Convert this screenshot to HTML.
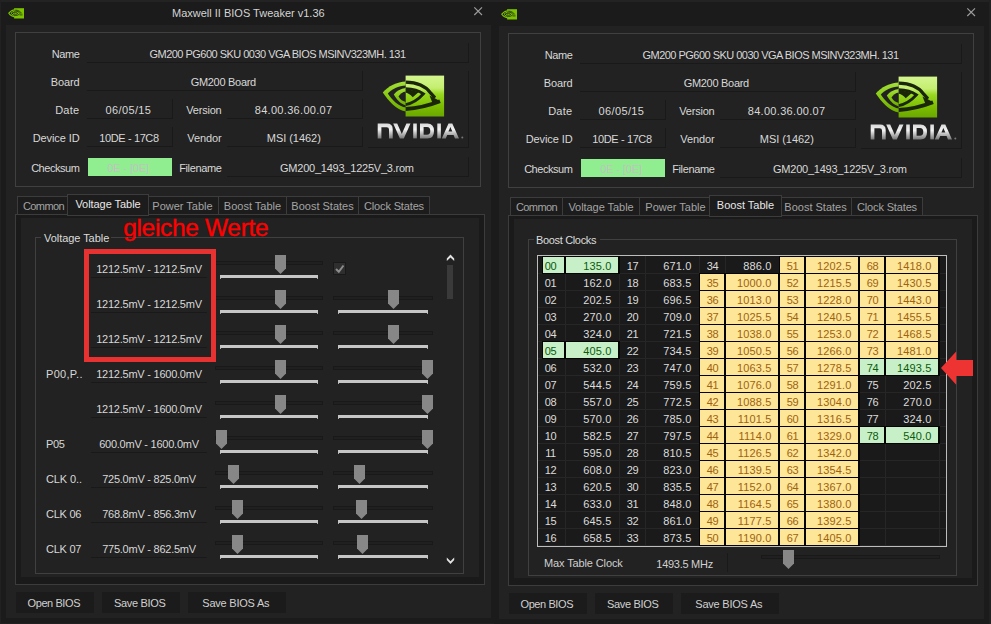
<!DOCTYPE html><html><head><meta charset="utf-8"><style>
html,body{margin:0;padding:0;width:991px;height:624px;overflow:hidden;background:#1b1b1b;position:relative;font-family:"Liberation Sans",sans-serif}
body>div,body>svg{position:absolute}
</style></head><body>
<div style="left:0px;top:0px;width:991px;height:2px;background:#232323;"></div>
<div style="left:0px;top:0px;width:1px;height:624px;background:#212121;"></div>
<div style="left:0px;top:623px;width:494px;height:1px;background:#202020;"></div>
<div style="left:989px;top:0px;width:2px;height:624px;background:#212121;"></div>
<div style="left:6px;top:25px;width:485px;height:593px;background:#222222;"></div>
<svg style="left:8px;top:8px" width="17" height="11" viewBox="8 7.5 17 11">
<defs><clipPath id="ic1"><rect x="8" y="7" width="6.1" height="12"/></clipPath><clipPath id="ir1"><rect x="14.1" y="7" width="10" height="12"/></clipPath></defs>
<rect x="14.1" y="7.7" width="9.9" height="10.3" fill="#7cc400"/>
<g clip-path="url(#ic1)" fill="none" stroke="#7cc400">
<path d="M8.8 12.7 C10.8 10 13 9.2 15.8 9.2 C18.8 9.2 21 11 22.2 12.9 C20.8 15 18.4 16.4 15.5 16.4 C12.6 16.4 10.4 15 8.8 12.7Z" stroke-width="1.1"/><path d="M11 12.8 C12.3 11.3 13.8 10.6 15.6 10.6 C17.6 10.6 19.1 11.6 20 12.9 C19 14.2 17.5 15 15.5 15 C13.6 15 12.2 14.1 11 12.8Z" stroke-width="1"/><path d="M13.2 12.8 C13.9 12.1 14.7 11.9 15.5 11.9 C16.5 12 17.2 12.4 17.7 12.9 C17.1 13.5 16.4 13.8 15.5 13.8 C14.6 13.8 13.8 13.4 13.2 12.8Z" stroke-width="0.9"/>
</g>
<g clip-path="url(#ir1)" fill="none" stroke="#141414">
<path d="M11 12.8 C12.3 11.3 13.8 10.6 15.6 10.6 C17.6 10.6 19.1 11.6 20 12.9 C19 14.2 17.5 15 15.5 15 C13.6 15 12.2 14.1 11 12.8Z" stroke-width="0.7"/><path d="M13.2 12.8 C13.9 12.1 14.7 11.9 15.5 11.9 C16.5 12 17.2 12.4 17.7 12.9 C17.1 13.5 16.4 13.8 15.5 13.8 C14.6 13.8 13.8 13.4 13.2 12.8Z" stroke-width="0.7"/>
<path d="M15.3 9.6 C18.3 9.6 20.6 11.2 21.8 13 M19.5 14.4 L22.5 14.4" stroke-width="0.7"/>
</g>
</svg>
<svg style="left:473px;top:6px" width="10" height="10" viewBox="0 0 10 10">
<path d="M1.3 1.3L9 9M9 1.3L1.3 9" stroke="#9c9c9c" stroke-width="1.15"/></svg>
<div style="left:172px;top:2.93px;height:20px;line-height:20px;font-size:11px;color:#d4d4d4;white-space:pre;">Maxwell II BIOS Tweaker v1.36</div>
<div style="left:15px;top:32px;width:466px;height:155px;border:1px solid #404040;box-sizing:border-box;"></div>
<div style="left:-320.5px;width:400px;text-align:right;top:44.13px;height:20px;line-height:20px;font-size:11px;color:#d8d8d8;letter-spacing:-0.38px;white-space:pre;">Name</div>
<div style="left:-320.5px;width:400px;text-align:right;top:72.13px;height:20px;line-height:20px;font-size:11px;color:#d8d8d8;letter-spacing:-0.12px;white-space:pre;">Board</div>
<div style="left:-320.5px;width:400px;text-align:right;top:100.13px;height:20px;line-height:20px;font-size:11px;color:#d8d8d8;letter-spacing:0.28px;white-space:pre;">Date</div>
<div style="left:-320.5px;width:400px;text-align:right;top:128.13px;height:20px;line-height:20px;font-size:11px;color:#d8d8d8;letter-spacing:-0.09px;white-space:pre;">Device ID</div>
<div style="left:-320.5px;width:400px;text-align:right;top:157.83px;height:20px;line-height:20px;font-size:11px;color:#d8d8d8;letter-spacing:-0.45px;white-space:pre;">Checksum</div>
<div style="left:-178.5px;width:400px;text-align:right;top:100.13px;height:20px;line-height:20px;font-size:11px;color:#d8d8d8;letter-spacing:-0.22px;white-space:pre;">Version</div>
<div style="left:-178.5px;width:400px;text-align:right;top:128.13px;height:20px;line-height:20px;font-size:11px;color:#d8d8d8;letter-spacing:-0.12px;white-space:pre;">Vendor</div>
<div style="left:-178.5px;width:400px;text-align:right;top:157.83px;height:20px;line-height:20px;font-size:11px;color:#d8d8d8;letter-spacing:-0.36px;white-space:pre;">Filename</div>
<div style="left:87px;top:43px;width:382px;height:20px;border-right:1px solid #191919;border-bottom:1px solid #191919;box-sizing:border-box;"></div>
<div style="left:87px;top:71px;width:276px;height:20px;border-right:1px solid #191919;border-bottom:1px solid #191919;box-sizing:border-box;"></div>
<div style="left:87px;top:99px;width:86px;height:20px;border-right:1px solid #191919;border-bottom:1px solid #191919;box-sizing:border-box;"></div>
<div style="left:227px;top:99px;width:136px;height:20px;border-right:1px solid #191919;border-bottom:1px solid #191919;box-sizing:border-box;"></div>
<div style="left:87px;top:127px;width:86px;height:20px;border-right:1px solid #191919;border-bottom:1px solid #191919;box-sizing:border-box;"></div>
<div style="left:227px;top:127px;width:136px;height:20px;border-right:1px solid #191919;border-bottom:1px solid #191919;box-sizing:border-box;"></div>
<div style="left:227px;top:157px;width:242px;height:20px;border-right:1px solid #191919;border-bottom:1px solid #191919;box-sizing:border-box;"></div>
<div style="left:368px;top:71px;width:101px;height:77px;border-right:1px solid #191919;border-bottom:1px solid #191919;box-sizing:border-box;"></div>
<div style="left:88px;top:158px;width:84px;height:18px;background:#90ee90;"></div>
<div style="left:77.5px;width:400px;text-align:center;top:44.13px;height:20px;line-height:20px;font-size:11px;color:#d8d8d8;letter-spacing:-0.52px;white-space:pre;">GM200 PG600 SKU 0030 VGA BIOS MSINV323MH. 131</div>
<div style="left:23.30000000000001px;width:400px;text-align:center;top:72.13px;height:20px;line-height:20px;font-size:11px;color:#d8d8d8;letter-spacing:-0.29px;white-space:pre;">GM200 Board</div>
<div style="left:-71.6px;width:400px;text-align:center;top:100.13px;height:20px;line-height:20px;font-size:11px;color:#d8d8d8;letter-spacing:0.37px;white-space:pre;">06/05/15</div>
<div style="left:93.60000000000002px;width:400px;text-align:center;top:100.13px;height:20px;line-height:20px;font-size:11px;color:#d8d8d8;letter-spacing:0.31px;white-space:pre;">84.00.36.00.07</div>
<div style="left:-71px;width:400px;text-align:center;top:128.13px;height:20px;line-height:20px;font-size:11px;color:#d8d8d8;letter-spacing:-0.39px;white-space:pre;">10DE - 17C8</div>
<div style="left:93.80000000000001px;width:400px;text-align:center;top:128.13px;height:20px;line-height:20px;font-size:11px;color:#d8d8d8;letter-spacing:-0.04px;white-space:pre;">MSI (1462)</div>
<div style="left:-71.9px;width:400px;text-align:center;top:157.83px;height:20px;line-height:20px;font-size:11px;color:#c2c2c2;letter-spacing:-0.1px;white-space:pre;">0E - [0E]</div>
<div style="left:146.89999999999998px;width:400px;text-align:center;top:157.83px;height:20px;line-height:20px;font-size:11px;color:#d8d8d8;letter-spacing:-0.23px;white-space:pre;">GM200_1493_1225V_3.rom</div>
<svg style="left:376px;top:72px" width="92" height="72" viewBox="376 72 92 72">
<defs>
<linearGradient id="g0" x1="0" y1="0" x2="0" y2="1">
<stop offset="0" stop-color="#d4f68e"/><stop offset="0.3" stop-color="#c4ee70"/><stop offset="0.45" stop-color="#98d820"/><stop offset="0.75" stop-color="#7cbc00"/><stop offset="1" stop-color="#6aa800"/>
</linearGradient>
<linearGradient id="e0" x1="0" y1="0" x2="0" y2="1">
<stop offset="0" stop-color="#a4e03a"/><stop offset="0.5" stop-color="#86c810"/><stop offset="1" stop-color="#6cac00"/>
</linearGradient>
<linearGradient id="s0" x1="0" y1="0" x2="0" y2="1">
<stop offset="0" stop-color="#d8d8d8"/><stop offset="0.4" stop-color="#f2f2f2"/><stop offset="0.7" stop-color="#b4b4b4"/><stop offset="1" stop-color="#7a7a7a"/>
</linearGradient>
<clipPath id="cl0"><rect x="370" y="70" width="35.6" height="50"/></clipPath>
<clipPath id="cr0"><rect x="405.6" y="75.6" width="38.5" height="40.9"/></clipPath>
</defs>
<rect x="405.6" y="75.6" width="38.5" height="40.9" fill="url(#g0)"/>
<g clip-path="url(#cl0)">
<path d="M406 81.6 C397 81.8 388 86.5 382.8 92.4 C388 100.5 397 110.5 406 111.5Z" fill="url(#e0)"/>
<path d="M406 85.6 C398.5 86 391.5 89.5 387.8 93.5 C391.5 99.5 398.5 106.5 406 107.6Z" fill="#222"/>
<path d="M406 88 C400.5 88.5 396.5 91 393.8 94.5 C396.5 99 400.5 104.5 406 105.2Z" fill="url(#e0)"/>
<path d="M406 91.6 C402.5 92 400 94 398.5 96.5 C400 99.5 403 101.5 406 102Z" fill="#222"/>
</g>
<g clip-path="url(#cr0)" fill="#1b2608">
<path d="M405.6 82.2 C416 82.3 425.5 86 430.8 93.2 L435 97.8" fill="none" stroke="#1b2608" stroke-width="3.2"/>
<path d="M429.5 95.5 L440.4 101.2 L432.5 103 Z"/>
<path d="M405.6 109 C420 108.2 431 104.8 440 101.3" fill="none" stroke="#1b2608" stroke-width="3.8"/>
<path d="M405.6 88.6 C413 88.8 419.5 90.9 423.5 93.8 C419 98.8 413 103.4 405.6 104.6" fill="none" stroke="#1b2608" stroke-width="2.8"/>
<path d="M405.6 89.5 C411 89.8 415.5 90.8 418.5 92.2 L412.7 97.2 C410.5 94.8 408.5 93.2 405.6 92.6 Z"/>
</g>
<g fill="url(#s0)" fill-rule="evenodd">
<path d="M377.7 138.4 V123.5 H387 Q392.7 123.5 392.7 129 V138.4 H389 V129.5 Q389 127.2 386.7 127.2 H381.4 V138.4Z"/>
<path d="M393.2 123.5 H397.2 L401.8 134 L406.4 123.5 H410.5 L403.8 138.4 H399.9Z"/>
<path d="M413.2 123.5 H416.8 V138.4 H413.2Z"/>
<path d="M420 123.5 H427.5 Q434 123.5 434 131 Q434 138.4 427.5 138.4 H420Z M423.6 127.1 V134.8 H427 Q430.3 134.8 430.3 131 Q430.3 127.1 427 127.1Z"/>
<path d="M437.3 123.5 H440.9 V138.4 H437.3Z"/>
<path d="M441.8 138.4 L448.5 123.5 H452.3 L459 138.4 H455 L453.6 135 H447.2 L445.8 138.4Z M448.4 131.6 H452.3 L450.4 127Z"/>
</g>
<circle cx="462.3" cy="137.4" r="1" fill="#777"/>
</svg>
<div style="left:15px;top:214px;width:470px;height:371px;border:1px solid #3c3c3c;box-sizing:border-box;background:#1a1a1a;"></div>
<div style="left:21px;top:218px;width:458px;height:359px;background:#222222;"></div>
<div style="left:17px;top:196px;width:53px;height:18px;border:1px solid #3c3c3c;border-bottom:none;box-sizing:border-box;background:#1c1c1c"></div>
<div style="left:-156.5px;width:400px;text-align:center;top:195.63px;height:20px;line-height:20px;font-size:11px;color:#a4a4a4;letter-spacing:-0.62px;white-space:pre;">Common</div>
<div style="left:146px;top:196px;width:73px;height:18px;border:1px solid #3c3c3c;border-bottom:none;box-sizing:border-box;background:#1c1c1c"></div>
<div style="left:-17.5px;width:400px;text-align:center;top:195.63px;height:20px;line-height:20px;font-size:11px;color:#a4a4a4;letter-spacing:0.0px;white-space:pre;">Power Table</div>
<div style="left:218px;top:196px;width:69px;height:18px;border:1px solid #3c3c3c;border-bottom:none;box-sizing:border-box;background:#1c1c1c"></div>
<div style="left:52.5px;width:400px;text-align:center;top:195.63px;height:20px;line-height:20px;font-size:11px;color:#a4a4a4;letter-spacing:0.0px;white-space:pre;">Boost Table</div>
<div style="left:286px;top:196px;width:73px;height:18px;border:1px solid #3c3c3c;border-bottom:none;box-sizing:border-box;background:#1c1c1c"></div>
<div style="left:122.5px;width:400px;text-align:center;top:195.63px;height:20px;line-height:20px;font-size:11px;color:#a4a4a4;letter-spacing:0.0px;white-space:pre;">Boost States</div>
<div style="left:358px;top:196px;width:72px;height:18px;border:1px solid #3c3c3c;border-bottom:none;box-sizing:border-box;background:#1c1c1c"></div>
<div style="left:194.0px;width:400px;text-align:center;top:195.63px;height:20px;line-height:20px;font-size:11px;color:#a4a4a4;letter-spacing:-0.15px;white-space:pre;">Clock States</div>
<div style="left:67px;top:194px;width:82px;height:22px;border:1px solid #3c3c3c;box-sizing:border-box;background:#1c1c1c"></div>
<div style="left:-92.0px;width:400px;text-align:center;top:194.13px;height:20px;line-height:20px;font-size:11px;color:#e8e8e8;letter-spacing:-0.05px;white-space:pre;">Voltage Table</div>
<div style="left:16px;top:592px;width:78px;height:21px;background:#1b1b1b;"></div>
<div style="left:-146.2px;width:400px;text-align:center;top:593.13px;height:20px;line-height:20px;font-size:11px;color:#d0d0d0;letter-spacing:-0.41px;white-space:pre;">Open BIOS</div>
<div style="left:102px;top:592px;width:78px;height:21px;background:#1b1b1b;"></div>
<div style="left:-60.19999999999999px;width:400px;text-align:center;top:593.13px;height:20px;line-height:20px;font-size:11px;color:#d0d0d0;letter-spacing:-0.33px;white-space:pre;">Save BIOS</div>
<div style="left:188px;top:592px;width:98px;height:21px;background:#1b1b1b;"></div>
<div style="left:35.80000000000001px;width:400px;text-align:center;top:593.13px;height:20px;line-height:20px;font-size:11px;color:#d0d0d0;letter-spacing:-0.22px;white-space:pre;">Save BIOS As</div>
<div style="left:35px;top:237px;width:429px;height:337px;border:1px solid #404040;box-sizing:border-box;"></div>
<div style="left:41px;top:230px;width:70px;height:14px;background:#222222;"></div>
<div style="left:44px;top:228.13px;height:20px;line-height:20px;font-size:11px;color:#dcdcdc;letter-spacing:-0.05px;white-space:pre;">Voltage Table</div>
<div style="left:91px;top:277px;width:116px;height:1px;background:#191919;"></div>
<div style="left:-51px;width:400px;text-align:center;top:259.13px;height:20px;line-height:20px;font-size:11px;color:#d8d8d8;letter-spacing:-0.24px;white-space:pre;">1212.5mV - 1212.5mV</div>
<div style="left:215px;top:261px;width:108px;height:4px;border:1px solid #191919;box-sizing:border-box;background:#202020"></div>
<div style="left:220px;top:275px;width:98px;height:3px;background:#c6c6c6;"></div>
<div style="left:220px;top:278px;width:1px;height:1px;background:#aaaaaa;"></div>
<div style="left:317px;top:278px;width:1px;height:1px;background:#aaaaaa;"></div>
<svg style="left:275.0px;top:255px" width="11" height="20" viewBox="0 0 11 20"><path d="M0 0H11V13.5L5.5 19L0 13.5Z" fill="#878787"/></svg>
<svg style="left:333px;top:262px" width="13" height="13" viewBox="0 0 13 13"><rect x="0.5" y="0.5" width="12" height="12" fill="#2e2e2e" stroke="#191919"/><path d="M3 7L5.8 9.8L10.5 3.5" fill="none" stroke="#8c8c8c" stroke-width="2"/></svg>
<div style="left:91px;top:312px;width:116px;height:1px;background:#191919;"></div>
<div style="left:-51px;width:400px;text-align:center;top:294.13px;height:20px;line-height:20px;font-size:11px;color:#d8d8d8;letter-spacing:-0.24px;white-space:pre;">1212.5mV - 1212.5mV</div>
<div style="left:215px;top:296px;width:108px;height:4px;border:1px solid #191919;box-sizing:border-box;background:#202020"></div>
<div style="left:220px;top:310px;width:98px;height:3px;background:#c6c6c6;"></div>
<div style="left:220px;top:313px;width:1px;height:1px;background:#aaaaaa;"></div>
<div style="left:317px;top:313px;width:1px;height:1px;background:#aaaaaa;"></div>
<svg style="left:275.0px;top:290px" width="11" height="20" viewBox="0 0 11 20"><path d="M0 0H11V13.5L5.5 19L0 13.5Z" fill="#878787"/></svg>
<div style="left:333px;top:296px;width:100px;height:4px;border:1px solid #191919;box-sizing:border-box;background:#202020"></div>
<div style="left:338px;top:310px;width:90px;height:3px;background:#c6c6c6;"></div>
<div style="left:338px;top:313px;width:1px;height:1px;background:#aaaaaa;"></div>
<div style="left:427px;top:313px;width:1px;height:1px;background:#aaaaaa;"></div>
<svg style="left:388.0px;top:290px" width="11" height="20" viewBox="0 0 11 20"><path d="M0 0H11V13.5L5.5 19L0 13.5Z" fill="#878787"/></svg>
<div style="left:91px;top:347px;width:116px;height:1px;background:#191919;"></div>
<div style="left:-51px;width:400px;text-align:center;top:329.13px;height:20px;line-height:20px;font-size:11px;color:#d8d8d8;letter-spacing:-0.24px;white-space:pre;">1212.5mV - 1212.5mV</div>
<div style="left:215px;top:331px;width:108px;height:4px;border:1px solid #191919;box-sizing:border-box;background:#202020"></div>
<div style="left:220px;top:345px;width:98px;height:3px;background:#c6c6c6;"></div>
<div style="left:220px;top:348px;width:1px;height:1px;background:#aaaaaa;"></div>
<div style="left:317px;top:348px;width:1px;height:1px;background:#aaaaaa;"></div>
<svg style="left:275.0px;top:325px" width="11" height="20" viewBox="0 0 11 20"><path d="M0 0H11V13.5L5.5 19L0 13.5Z" fill="#878787"/></svg>
<div style="left:333px;top:331px;width:100px;height:4px;border:1px solid #191919;box-sizing:border-box;background:#202020"></div>
<div style="left:338px;top:345px;width:90px;height:3px;background:#c6c6c6;"></div>
<div style="left:338px;top:348px;width:1px;height:1px;background:#aaaaaa;"></div>
<div style="left:427px;top:348px;width:1px;height:1px;background:#aaaaaa;"></div>
<svg style="left:388.0px;top:325px" width="11" height="20" viewBox="0 0 11 20"><path d="M0 0H11V13.5L5.5 19L0 13.5Z" fill="#878787"/></svg>
<div style="left:46px;top:364.13px;height:20px;line-height:20px;font-size:11px;color:#d8d8d8;letter-spacing:0.3px;white-space:pre;">P00,P..</div>
<div style="left:91px;top:382px;width:116px;height:1px;background:#191919;"></div>
<div style="left:-51px;width:400px;text-align:center;top:364.13px;height:20px;line-height:20px;font-size:11px;color:#d8d8d8;letter-spacing:-0.24px;white-space:pre;">1212.5mV - 1600.0mV</div>
<div style="left:215px;top:366px;width:108px;height:4px;border:1px solid #191919;box-sizing:border-box;background:#202020"></div>
<div style="left:220px;top:380px;width:98px;height:3px;background:#c6c6c6;"></div>
<div style="left:220px;top:383px;width:1px;height:1px;background:#aaaaaa;"></div>
<div style="left:317px;top:383px;width:1px;height:1px;background:#aaaaaa;"></div>
<svg style="left:275.0px;top:360px" width="11" height="20" viewBox="0 0 11 20"><path d="M0 0H11V13.5L5.5 19L0 13.5Z" fill="#878787"/></svg>
<div style="left:333px;top:366px;width:100px;height:4px;border:1px solid #191919;box-sizing:border-box;background:#202020"></div>
<div style="left:338px;top:380px;width:90px;height:3px;background:#c6c6c6;"></div>
<div style="left:338px;top:383px;width:1px;height:1px;background:#aaaaaa;"></div>
<div style="left:427px;top:383px;width:1px;height:1px;background:#aaaaaa;"></div>
<svg style="left:422.0px;top:360px" width="11" height="20" viewBox="0 0 11 20"><path d="M0 0H11V13.5L5.5 19L0 13.5Z" fill="#878787"/></svg>
<div style="left:91px;top:417px;width:116px;height:1px;background:#191919;"></div>
<div style="left:-51px;width:400px;text-align:center;top:399.13px;height:20px;line-height:20px;font-size:11px;color:#d8d8d8;letter-spacing:-0.24px;white-space:pre;">1212.5mV - 1600.0mV</div>
<div style="left:215px;top:401px;width:108px;height:4px;border:1px solid #191919;box-sizing:border-box;background:#202020"></div>
<div style="left:220px;top:415px;width:98px;height:3px;background:#c6c6c6;"></div>
<div style="left:220px;top:418px;width:1px;height:1px;background:#aaaaaa;"></div>
<div style="left:317px;top:418px;width:1px;height:1px;background:#aaaaaa;"></div>
<svg style="left:275.0px;top:395px" width="11" height="20" viewBox="0 0 11 20"><path d="M0 0H11V13.5L5.5 19L0 13.5Z" fill="#878787"/></svg>
<div style="left:333px;top:401px;width:100px;height:4px;border:1px solid #191919;box-sizing:border-box;background:#202020"></div>
<div style="left:338px;top:415px;width:90px;height:3px;background:#c6c6c6;"></div>
<div style="left:338px;top:418px;width:1px;height:1px;background:#aaaaaa;"></div>
<div style="left:427px;top:418px;width:1px;height:1px;background:#aaaaaa;"></div>
<svg style="left:422.0px;top:395px" width="11" height="20" viewBox="0 0 11 20"><path d="M0 0H11V13.5L5.5 19L0 13.5Z" fill="#878787"/></svg>
<div style="left:46px;top:434.13px;height:20px;line-height:20px;font-size:11px;color:#d8d8d8;letter-spacing:-0.3px;white-space:pre;">P05</div>
<div style="left:91px;top:452px;width:116px;height:1px;background:#191919;"></div>
<div style="left:-51px;width:400px;text-align:center;top:434.13px;height:20px;line-height:20px;font-size:11px;color:#d8d8d8;letter-spacing:-0.24px;white-space:pre;">600.0mV - 1600.0mV</div>
<div style="left:215px;top:436px;width:108px;height:4px;border:1px solid #191919;box-sizing:border-box;background:#202020"></div>
<div style="left:220px;top:450px;width:98px;height:3px;background:#c6c6c6;"></div>
<div style="left:220px;top:453px;width:1px;height:1px;background:#aaaaaa;"></div>
<div style="left:317px;top:453px;width:1px;height:1px;background:#aaaaaa;"></div>
<svg style="left:216.0px;top:430px" width="11" height="20" viewBox="0 0 11 20"><path d="M0 0H11V13.5L5.5 19L0 13.5Z" fill="#878787"/></svg>
<div style="left:333px;top:436px;width:100px;height:4px;border:1px solid #191919;box-sizing:border-box;background:#202020"></div>
<div style="left:338px;top:450px;width:90px;height:3px;background:#c6c6c6;"></div>
<div style="left:338px;top:453px;width:1px;height:1px;background:#aaaaaa;"></div>
<div style="left:427px;top:453px;width:1px;height:1px;background:#aaaaaa;"></div>
<svg style="left:422.0px;top:430px" width="11" height="20" viewBox="0 0 11 20"><path d="M0 0H11V13.5L5.5 19L0 13.5Z" fill="#878787"/></svg>
<div style="left:46px;top:469.13px;height:20px;line-height:20px;font-size:11px;color:#d8d8d8;letter-spacing:-0.1px;white-space:pre;">CLK 0..</div>
<div style="left:91px;top:487px;width:116px;height:1px;background:#191919;"></div>
<div style="left:-51px;width:400px;text-align:center;top:469.13px;height:20px;line-height:20px;font-size:11px;color:#d8d8d8;letter-spacing:-0.24px;white-space:pre;">725.0mV - 825.0mV</div>
<div style="left:215px;top:471px;width:108px;height:4px;border:1px solid #191919;box-sizing:border-box;background:#202020"></div>
<div style="left:220px;top:485px;width:98px;height:3px;background:#c6c6c6;"></div>
<div style="left:220px;top:488px;width:1px;height:1px;background:#aaaaaa;"></div>
<div style="left:317px;top:488px;width:1px;height:1px;background:#aaaaaa;"></div>
<svg style="left:227.7px;top:465px" width="11" height="20" viewBox="0 0 11 20"><path d="M0 0H11V13.5L5.5 19L0 13.5Z" fill="#878787"/></svg>
<div style="left:333px;top:471px;width:100px;height:4px;border:1px solid #191919;box-sizing:border-box;background:#202020"></div>
<div style="left:338px;top:485px;width:90px;height:3px;background:#c6c6c6;"></div>
<div style="left:338px;top:488px;width:1px;height:1px;background:#aaaaaa;"></div>
<div style="left:427px;top:488px;width:1px;height:1px;background:#aaaaaa;"></div>
<svg style="left:353.5px;top:465px" width="11" height="20" viewBox="0 0 11 20"><path d="M0 0H11V13.5L5.5 19L0 13.5Z" fill="#878787"/></svg>
<div style="left:46px;top:504.13px;height:20px;line-height:20px;font-size:11px;color:#d8d8d8;letter-spacing:-0.25px;white-space:pre;">CLK 06</div>
<div style="left:91px;top:522px;width:116px;height:1px;background:#191919;"></div>
<div style="left:-51px;width:400px;text-align:center;top:504.13px;height:20px;line-height:20px;font-size:11px;color:#d8d8d8;letter-spacing:-0.24px;white-space:pre;">768.8mV - 856.3mV</div>
<div style="left:215px;top:506px;width:108px;height:4px;border:1px solid #191919;box-sizing:border-box;background:#202020"></div>
<div style="left:220px;top:520px;width:98px;height:3px;background:#c6c6c6;"></div>
<div style="left:220px;top:523px;width:1px;height:1px;background:#aaaaaa;"></div>
<div style="left:317px;top:523px;width:1px;height:1px;background:#aaaaaa;"></div>
<svg style="left:232.0px;top:500px" width="11" height="20" viewBox="0 0 11 20"><path d="M0 0H11V13.5L5.5 19L0 13.5Z" fill="#878787"/></svg>
<div style="left:333px;top:506px;width:100px;height:4px;border:1px solid #191919;box-sizing:border-box;background:#202020"></div>
<div style="left:338px;top:520px;width:90px;height:3px;background:#c6c6c6;"></div>
<div style="left:338px;top:523px;width:1px;height:1px;background:#aaaaaa;"></div>
<div style="left:427px;top:523px;width:1px;height:1px;background:#aaaaaa;"></div>
<svg style="left:356.0px;top:500px" width="11" height="20" viewBox="0 0 11 20"><path d="M0 0H11V13.5L5.5 19L0 13.5Z" fill="#878787"/></svg>
<div style="left:46px;top:539.13px;height:20px;line-height:20px;font-size:11px;color:#d8d8d8;letter-spacing:-0.25px;white-space:pre;">CLK 07</div>
<div style="left:91px;top:557px;width:116px;height:1px;background:#191919;"></div>
<div style="left:-51px;width:400px;text-align:center;top:539.13px;height:20px;line-height:20px;font-size:11px;color:#d8d8d8;letter-spacing:-0.24px;white-space:pre;">775.0mV - 862.5mV</div>
<div style="left:215px;top:541px;width:108px;height:4px;border:1px solid #191919;box-sizing:border-box;background:#202020"></div>
<div style="left:220px;top:555px;width:98px;height:3px;background:#c6c6c6;"></div>
<div style="left:220px;top:558px;width:1px;height:1px;background:#aaaaaa;"></div>
<div style="left:317px;top:558px;width:1px;height:1px;background:#aaaaaa;"></div>
<svg style="left:232.0px;top:535px" width="11" height="20" viewBox="0 0 11 20"><path d="M0 0H11V13.5L5.5 19L0 13.5Z" fill="#878787"/></svg>
<div style="left:333px;top:541px;width:100px;height:4px;border:1px solid #191919;box-sizing:border-box;background:#202020"></div>
<div style="left:338px;top:555px;width:90px;height:3px;background:#c6c6c6;"></div>
<div style="left:338px;top:558px;width:1px;height:1px;background:#aaaaaa;"></div>
<div style="left:427px;top:558px;width:1px;height:1px;background:#aaaaaa;"></div>
<svg style="left:357.0px;top:535px" width="11" height="20" viewBox="0 0 11 20"><path d="M0 0H11V13.5L5.5 19L0 13.5Z" fill="#878787"/></svg>
<svg style="left:446px;top:254px" width="9" height="8" viewBox="446 254 9 8"><path d="M446.8 258.6L450.5 254.6L454.2 258.6V261L450.5 257.4L446.8 261Z" fill="#e2e2e2"/></svg>
<div style="left:447px;top:265px;width:6px;height:34px;background:#3a3a3a;"></div>
<svg style="left:446px;top:557px" width="9" height="8" viewBox="446 557 9 8"><path d="M446.8 557.6L450.5 561.2L454.2 557.6V560L450.5 564L446.8 560Z" fill="#e2e2e2"/></svg>
<div style="left:84px;top:249px;width:132px;height:113px;border:5px solid #e83232;box-sizing:border-box"></div>
<div style="left:123.2px;top:216.4px;height:24px;line-height:24px;font-size:24.5px;color:#ff0000;white-space:pre;letter-spacing:-0.33px;-webkit-text-stroke:0.35px #ff0000">gleiche Werte</div>
<div style="left:499px;top:26px;width:485px;height:593px;background:#222222;"></div>
<svg style="left:501px;top:9px" width="17" height="11" viewBox="8 7.5 17 11">
<defs><clipPath id="ic2"><rect x="8" y="7" width="6.1" height="12"/></clipPath><clipPath id="ir2"><rect x="14.1" y="7" width="10" height="12"/></clipPath></defs>
<rect x="14.1" y="7.7" width="9.9" height="10.3" fill="#7cc400"/>
<g clip-path="url(#ic2)" fill="none" stroke="#7cc400">
<path d="M8.8 12.7 C10.8 10 13 9.2 15.8 9.2 C18.8 9.2 21 11 22.2 12.9 C20.8 15 18.4 16.4 15.5 16.4 C12.6 16.4 10.4 15 8.8 12.7Z" stroke-width="1.1"/><path d="M11 12.8 C12.3 11.3 13.8 10.6 15.6 10.6 C17.6 10.6 19.1 11.6 20 12.9 C19 14.2 17.5 15 15.5 15 C13.6 15 12.2 14.1 11 12.8Z" stroke-width="1"/><path d="M13.2 12.8 C13.9 12.1 14.7 11.9 15.5 11.9 C16.5 12 17.2 12.4 17.7 12.9 C17.1 13.5 16.4 13.8 15.5 13.8 C14.6 13.8 13.8 13.4 13.2 12.8Z" stroke-width="0.9"/>
</g>
<g clip-path="url(#ir2)" fill="none" stroke="#141414">
<path d="M11 12.8 C12.3 11.3 13.8 10.6 15.6 10.6 C17.6 10.6 19.1 11.6 20 12.9 C19 14.2 17.5 15 15.5 15 C13.6 15 12.2 14.1 11 12.8Z" stroke-width="0.7"/><path d="M13.2 12.8 C13.9 12.1 14.7 11.9 15.5 11.9 C16.5 12 17.2 12.4 17.7 12.9 C17.1 13.5 16.4 13.8 15.5 13.8 C14.6 13.8 13.8 13.4 13.2 12.8Z" stroke-width="0.7"/>
<path d="M15.3 9.6 C18.3 9.6 20.6 11.2 21.8 13 M19.5 14.4 L22.5 14.4" stroke-width="0.7"/>
</g>
</svg>
<svg style="left:966px;top:7px" width="10" height="10" viewBox="0 0 10 10">
<path d="M1.3 1.3L9 9M9 1.3L1.3 9" stroke="#9c9c9c" stroke-width="1.15"/></svg>
<div style="left:508px;top:33px;width:466px;height:155px;border:1px solid #404040;box-sizing:border-box;"></div>
<div style="left:172.5px;width:400px;text-align:right;top:45.13px;height:20px;line-height:20px;font-size:11px;color:#d8d8d8;letter-spacing:-0.38px;white-space:pre;">Name</div>
<div style="left:172.5px;width:400px;text-align:right;top:73.13px;height:20px;line-height:20px;font-size:11px;color:#d8d8d8;letter-spacing:-0.12px;white-space:pre;">Board</div>
<div style="left:172.5px;width:400px;text-align:right;top:101.13px;height:20px;line-height:20px;font-size:11px;color:#d8d8d8;letter-spacing:0.28px;white-space:pre;">Date</div>
<div style="left:172.5px;width:400px;text-align:right;top:129.13px;height:20px;line-height:20px;font-size:11px;color:#d8d8d8;letter-spacing:-0.09px;white-space:pre;">Device ID</div>
<div style="left:172.5px;width:400px;text-align:right;top:158.83px;height:20px;line-height:20px;font-size:11px;color:#d8d8d8;letter-spacing:-0.45px;white-space:pre;">Checksum</div>
<div style="left:314.5px;width:400px;text-align:right;top:101.13px;height:20px;line-height:20px;font-size:11px;color:#d8d8d8;letter-spacing:-0.22px;white-space:pre;">Version</div>
<div style="left:314.5px;width:400px;text-align:right;top:129.13px;height:20px;line-height:20px;font-size:11px;color:#d8d8d8;letter-spacing:-0.12px;white-space:pre;">Vendor</div>
<div style="left:314.5px;width:400px;text-align:right;top:158.83px;height:20px;line-height:20px;font-size:11px;color:#d8d8d8;letter-spacing:-0.36px;white-space:pre;">Filename</div>
<div style="left:580px;top:44px;width:382px;height:20px;border-right:1px solid #191919;border-bottom:1px solid #191919;box-sizing:border-box;"></div>
<div style="left:580px;top:72px;width:276px;height:20px;border-right:1px solid #191919;border-bottom:1px solid #191919;box-sizing:border-box;"></div>
<div style="left:580px;top:100px;width:86px;height:20px;border-right:1px solid #191919;border-bottom:1px solid #191919;box-sizing:border-box;"></div>
<div style="left:720px;top:100px;width:136px;height:20px;border-right:1px solid #191919;border-bottom:1px solid #191919;box-sizing:border-box;"></div>
<div style="left:580px;top:128px;width:86px;height:20px;border-right:1px solid #191919;border-bottom:1px solid #191919;box-sizing:border-box;"></div>
<div style="left:720px;top:128px;width:136px;height:20px;border-right:1px solid #191919;border-bottom:1px solid #191919;box-sizing:border-box;"></div>
<div style="left:720px;top:158px;width:242px;height:20px;border-right:1px solid #191919;border-bottom:1px solid #191919;box-sizing:border-box;"></div>
<div style="left:861px;top:72px;width:101px;height:77px;border-right:1px solid #191919;border-bottom:1px solid #191919;box-sizing:border-box;"></div>
<div style="left:581px;top:159px;width:84px;height:18px;background:#90ee90;"></div>
<div style="left:570.5px;width:400px;text-align:center;top:45.13px;height:20px;line-height:20px;font-size:11px;color:#d8d8d8;letter-spacing:-0.52px;white-space:pre;">GM200 PG600 SKU 0030 VGA BIOS MSINV323MH. 131</div>
<div style="left:516.3px;width:400px;text-align:center;top:73.13px;height:20px;line-height:20px;font-size:11px;color:#d8d8d8;letter-spacing:-0.29px;white-space:pre;">GM200 Board</div>
<div style="left:421.4px;width:400px;text-align:center;top:101.13px;height:20px;line-height:20px;font-size:11px;color:#d8d8d8;letter-spacing:0.37px;white-space:pre;">06/05/15</div>
<div style="left:586.6px;width:400px;text-align:center;top:101.13px;height:20px;line-height:20px;font-size:11px;color:#d8d8d8;letter-spacing:0.31px;white-space:pre;">84.00.36.00.07</div>
<div style="left:422px;width:400px;text-align:center;top:129.13px;height:20px;line-height:20px;font-size:11px;color:#d8d8d8;letter-spacing:-0.39px;white-space:pre;">10DE - 17C8</div>
<div style="left:586.8px;width:400px;text-align:center;top:129.13px;height:20px;line-height:20px;font-size:11px;color:#d8d8d8;letter-spacing:-0.04px;white-space:pre;">MSI (1462)</div>
<div style="left:421.1px;width:400px;text-align:center;top:158.83px;height:20px;line-height:20px;font-size:11px;color:#c2c2c2;letter-spacing:-0.1px;white-space:pre;">0E - [0E]</div>
<div style="left:639.9px;width:400px;text-align:center;top:158.83px;height:20px;line-height:20px;font-size:11px;color:#d8d8d8;letter-spacing:-0.23px;white-space:pre;">GM200_1493_1225V_3.rom</div>
<svg style="left:869px;top:73px" width="92" height="72" viewBox="376 72 92 72">
<defs>
<linearGradient id="g493" x1="0" y1="0" x2="0" y2="1">
<stop offset="0" stop-color="#d4f68e"/><stop offset="0.3" stop-color="#c4ee70"/><stop offset="0.45" stop-color="#98d820"/><stop offset="0.75" stop-color="#7cbc00"/><stop offset="1" stop-color="#6aa800"/>
</linearGradient>
<linearGradient id="e493" x1="0" y1="0" x2="0" y2="1">
<stop offset="0" stop-color="#a4e03a"/><stop offset="0.5" stop-color="#86c810"/><stop offset="1" stop-color="#6cac00"/>
</linearGradient>
<linearGradient id="s493" x1="0" y1="0" x2="0" y2="1">
<stop offset="0" stop-color="#d8d8d8"/><stop offset="0.4" stop-color="#f2f2f2"/><stop offset="0.7" stop-color="#b4b4b4"/><stop offset="1" stop-color="#7a7a7a"/>
</linearGradient>
<clipPath id="cl493"><rect x="370" y="70" width="35.6" height="50"/></clipPath>
<clipPath id="cr493"><rect x="405.6" y="75.6" width="38.5" height="40.9"/></clipPath>
</defs>
<rect x="405.6" y="75.6" width="38.5" height="40.9" fill="url(#g493)"/>
<g clip-path="url(#cl493)">
<path d="M406 81.6 C397 81.8 388 86.5 382.8 92.4 C388 100.5 397 110.5 406 111.5Z" fill="url(#e493)"/>
<path d="M406 85.6 C398.5 86 391.5 89.5 387.8 93.5 C391.5 99.5 398.5 106.5 406 107.6Z" fill="#222"/>
<path d="M406 88 C400.5 88.5 396.5 91 393.8 94.5 C396.5 99 400.5 104.5 406 105.2Z" fill="url(#e493)"/>
<path d="M406 91.6 C402.5 92 400 94 398.5 96.5 C400 99.5 403 101.5 406 102Z" fill="#222"/>
</g>
<g clip-path="url(#cr493)" fill="#1b2608">
<path d="M405.6 82.2 C416 82.3 425.5 86 430.8 93.2 L435 97.8" fill="none" stroke="#1b2608" stroke-width="3.2"/>
<path d="M429.5 95.5 L440.4 101.2 L432.5 103 Z"/>
<path d="M405.6 109 C420 108.2 431 104.8 440 101.3" fill="none" stroke="#1b2608" stroke-width="3.8"/>
<path d="M405.6 88.6 C413 88.8 419.5 90.9 423.5 93.8 C419 98.8 413 103.4 405.6 104.6" fill="none" stroke="#1b2608" stroke-width="2.8"/>
<path d="M405.6 89.5 C411 89.8 415.5 90.8 418.5 92.2 L412.7 97.2 C410.5 94.8 408.5 93.2 405.6 92.6 Z"/>
</g>
<g fill="url(#s493)" fill-rule="evenodd">
<path d="M377.7 138.4 V123.5 H387 Q392.7 123.5 392.7 129 V138.4 H389 V129.5 Q389 127.2 386.7 127.2 H381.4 V138.4Z"/>
<path d="M393.2 123.5 H397.2 L401.8 134 L406.4 123.5 H410.5 L403.8 138.4 H399.9Z"/>
<path d="M413.2 123.5 H416.8 V138.4 H413.2Z"/>
<path d="M420 123.5 H427.5 Q434 123.5 434 131 Q434 138.4 427.5 138.4 H420Z M423.6 127.1 V134.8 H427 Q430.3 134.8 430.3 131 Q430.3 127.1 427 127.1Z"/>
<path d="M437.3 123.5 H440.9 V138.4 H437.3Z"/>
<path d="M441.8 138.4 L448.5 123.5 H452.3 L459 138.4 H455 L453.6 135 H447.2 L445.8 138.4Z M448.4 131.6 H452.3 L450.4 127Z"/>
</g>
<circle cx="462.3" cy="137.4" r="1" fill="#777"/>
</svg>
<div style="left:508px;top:215px;width:470px;height:371px;border:1px solid #3c3c3c;box-sizing:border-box;background:#1a1a1a;"></div>
<div style="left:514px;top:219px;width:458px;height:359px;background:#222222;"></div>
<div style="left:510px;top:197px;width:53px;height:18px;border:1px solid #3c3c3c;border-bottom:none;box-sizing:border-box;background:#1c1c1c"></div>
<div style="left:336.5px;width:400px;text-align:center;top:196.63px;height:20px;line-height:20px;font-size:11px;color:#a4a4a4;letter-spacing:-0.62px;white-space:pre;">Common</div>
<div style="left:562px;top:197px;width:78px;height:18px;border:1px solid #3c3c3c;border-bottom:none;box-sizing:border-box;background:#1c1c1c"></div>
<div style="left:401.0px;width:400px;text-align:center;top:196.63px;height:20px;line-height:20px;font-size:11px;color:#a4a4a4;letter-spacing:-0.05px;white-space:pre;">Voltage Table</div>
<div style="left:639px;top:197px;width:73px;height:18px;border:1px solid #3c3c3c;border-bottom:none;box-sizing:border-box;background:#1c1c1c"></div>
<div style="left:475.5px;width:400px;text-align:center;top:196.63px;height:20px;line-height:20px;font-size:11px;color:#a4a4a4;letter-spacing:0.0px;white-space:pre;">Power Table</div>
<div style="left:779px;top:197px;width:73px;height:18px;border:1px solid #3c3c3c;border-bottom:none;box-sizing:border-box;background:#1c1c1c"></div>
<div style="left:615.5px;width:400px;text-align:center;top:196.63px;height:20px;line-height:20px;font-size:11px;color:#a4a4a4;letter-spacing:0.0px;white-space:pre;">Boost States</div>
<div style="left:851px;top:197px;width:72px;height:18px;border:1px solid #3c3c3c;border-bottom:none;box-sizing:border-box;background:#1c1c1c"></div>
<div style="left:687.0px;width:400px;text-align:center;top:196.63px;height:20px;line-height:20px;font-size:11px;color:#a4a4a4;letter-spacing:-0.15px;white-space:pre;">Clock States</div>
<div style="left:709px;top:195px;width:73px;height:22px;border:1px solid #3c3c3c;box-sizing:border-box;background:#1c1c1c"></div>
<div style="left:545.5px;width:400px;text-align:center;top:195.13px;height:20px;line-height:20px;font-size:11px;color:#e8e8e8;letter-spacing:0.0px;white-space:pre;">Boost Table</div>
<div style="left:509px;top:593px;width:78px;height:21px;background:#1b1b1b;"></div>
<div style="left:346.79999999999995px;width:400px;text-align:center;top:594.13px;height:20px;line-height:20px;font-size:11px;color:#d0d0d0;letter-spacing:-0.41px;white-space:pre;">Open BIOS</div>
<div style="left:595px;top:593px;width:78px;height:21px;background:#1b1b1b;"></div>
<div style="left:432.79999999999995px;width:400px;text-align:center;top:594.13px;height:20px;line-height:20px;font-size:11px;color:#d0d0d0;letter-spacing:-0.33px;white-space:pre;">Save BIOS</div>
<div style="left:681px;top:593px;width:98px;height:21px;background:#1b1b1b;"></div>
<div style="left:528.8px;width:400px;text-align:center;top:594.13px;height:20px;line-height:20px;font-size:11px;color:#d0d0d0;letter-spacing:-0.22px;white-space:pre;">Save BIOS As</div>
<div style="left:528px;top:239px;width:429px;height:337px;border:1px solid #404040;box-sizing:border-box;"></div>
<div style="left:534px;top:232px;width:66px;height:14px;background:#222222;"></div>
<div style="left:536px;top:229.93px;height:20px;line-height:20px;font-size:11px;color:#dcdcdc;letter-spacing:-0.34px;white-space:pre;">Boost Clocks</div>
<div style="left:537px;top:255px;width:410px;height:292px;border:1px solid #bdbdbd;box-sizing:border-box;background:#1a1a1a"></div>
<div style="left:565px;top:256px;width:1px;height:290px;background:#262626;"></div>
<div style="left:619px;top:256px;width:1px;height:290px;background:#262626;"></div>
<div style="left:645px;top:256px;width:1px;height:290px;background:#262626;"></div>
<div style="left:699px;top:256px;width:1px;height:290px;background:#262626;"></div>
<div style="left:725px;top:256px;width:1px;height:290px;background:#262626;"></div>
<div style="left:779px;top:256px;width:1px;height:290px;background:#262626;"></div>
<div style="left:805px;top:256px;width:1px;height:290px;background:#262626;"></div>
<div style="left:859px;top:256px;width:1px;height:290px;background:#262626;"></div>
<div style="left:885px;top:256px;width:1px;height:290px;background:#262626;"></div>
<div style="left:939px;top:256px;width:1px;height:290px;background:#262626;"></div>
<div style="left:538px;top:273px;width:408px;height:1px;background:#262626;"></div>
<div style="left:538px;top:290px;width:408px;height:1px;background:#262626;"></div>
<div style="left:538px;top:307px;width:408px;height:1px;background:#262626;"></div>
<div style="left:538px;top:324px;width:408px;height:1px;background:#262626;"></div>
<div style="left:538px;top:341px;width:408px;height:1px;background:#262626;"></div>
<div style="left:538px;top:358px;width:408px;height:1px;background:#262626;"></div>
<div style="left:538px;top:375px;width:408px;height:1px;background:#262626;"></div>
<div style="left:538px;top:392px;width:408px;height:1px;background:#262626;"></div>
<div style="left:538px;top:409px;width:408px;height:1px;background:#262626;"></div>
<div style="left:538px;top:426px;width:408px;height:1px;background:#262626;"></div>
<div style="left:538px;top:443px;width:408px;height:1px;background:#262626;"></div>
<div style="left:538px;top:460px;width:408px;height:1px;background:#262626;"></div>
<div style="left:538px;top:477px;width:408px;height:1px;background:#262626;"></div>
<div style="left:538px;top:494px;width:408px;height:1px;background:#262626;"></div>
<div style="left:538px;top:511px;width:408px;height:1px;background:#262626;"></div>
<div style="left:538px;top:528px;width:408px;height:1px;background:#262626;"></div>
<div style="left:538px;top:545px;width:408px;height:1px;background:#262626;"></div>
<div style="left:542px;top:256px;width:78px;height:18px;background:#050505;"></div>
<div style="left:543px;top:257px;width:21px;height:16px;background:#c8f0c8;"></div>
<div style="left:566px;top:257px;width:52px;height:16px;background:#c8f0c8;"></div>
<div style="left:350.5px;width:400px;text-align:center;top:256.13px;height:20px;line-height:20px;font-size:11px;color:#0c5a0c;letter-spacing:-0.4px;white-space:pre;">00</div>
<div style="left:211.5px;width:400px;text-align:right;top:256.13px;height:20px;line-height:20px;font-size:11px;color:#0c5a0c;letter-spacing:0.15px;white-space:pre;">135.0</div>
<div style="left:350.5px;width:400px;text-align:center;top:273.13px;height:20px;line-height:20px;font-size:11px;color:#dcdcdc;letter-spacing:-0.4px;white-space:pre;">01</div>
<div style="left:211.5px;width:400px;text-align:right;top:273.13px;height:20px;line-height:20px;font-size:11px;color:#dcdcdc;letter-spacing:0.15px;white-space:pre;">162.0</div>
<div style="left:350.5px;width:400px;text-align:center;top:290.13px;height:20px;line-height:20px;font-size:11px;color:#dcdcdc;letter-spacing:-0.4px;white-space:pre;">02</div>
<div style="left:211.5px;width:400px;text-align:right;top:290.13px;height:20px;line-height:20px;font-size:11px;color:#dcdcdc;letter-spacing:0.15px;white-space:pre;">202.5</div>
<div style="left:350.5px;width:400px;text-align:center;top:307.13px;height:20px;line-height:20px;font-size:11px;color:#dcdcdc;letter-spacing:-0.4px;white-space:pre;">03</div>
<div style="left:211.5px;width:400px;text-align:right;top:307.13px;height:20px;line-height:20px;font-size:11px;color:#dcdcdc;letter-spacing:0.15px;white-space:pre;">270.0</div>
<div style="left:350.5px;width:400px;text-align:center;top:324.13px;height:20px;line-height:20px;font-size:11px;color:#dcdcdc;letter-spacing:-0.4px;white-space:pre;">04</div>
<div style="left:211.5px;width:400px;text-align:right;top:324.13px;height:20px;line-height:20px;font-size:11px;color:#dcdcdc;letter-spacing:0.15px;white-space:pre;">324.0</div>
<div style="left:542px;top:341px;width:78px;height:18px;background:#050505;"></div>
<div style="left:543px;top:342px;width:21px;height:16px;background:#c8f0c8;"></div>
<div style="left:566px;top:342px;width:52px;height:16px;background:#c8f0c8;"></div>
<div style="left:350.5px;width:400px;text-align:center;top:341.13px;height:20px;line-height:20px;font-size:11px;color:#0c5a0c;letter-spacing:-0.4px;white-space:pre;">05</div>
<div style="left:211.5px;width:400px;text-align:right;top:341.13px;height:20px;line-height:20px;font-size:11px;color:#0c5a0c;letter-spacing:0.15px;white-space:pre;">405.0</div>
<div style="left:350.5px;width:400px;text-align:center;top:358.13px;height:20px;line-height:20px;font-size:11px;color:#dcdcdc;letter-spacing:-0.4px;white-space:pre;">06</div>
<div style="left:211.5px;width:400px;text-align:right;top:358.13px;height:20px;line-height:20px;font-size:11px;color:#dcdcdc;letter-spacing:0.15px;white-space:pre;">532.0</div>
<div style="left:350.5px;width:400px;text-align:center;top:375.13px;height:20px;line-height:20px;font-size:11px;color:#dcdcdc;letter-spacing:-0.4px;white-space:pre;">07</div>
<div style="left:211.5px;width:400px;text-align:right;top:375.13px;height:20px;line-height:20px;font-size:11px;color:#dcdcdc;letter-spacing:0.15px;white-space:pre;">544.5</div>
<div style="left:350.5px;width:400px;text-align:center;top:392.13px;height:20px;line-height:20px;font-size:11px;color:#dcdcdc;letter-spacing:-0.4px;white-space:pre;">08</div>
<div style="left:211.5px;width:400px;text-align:right;top:392.13px;height:20px;line-height:20px;font-size:11px;color:#dcdcdc;letter-spacing:0.15px;white-space:pre;">557.0</div>
<div style="left:350.5px;width:400px;text-align:center;top:409.13px;height:20px;line-height:20px;font-size:11px;color:#dcdcdc;letter-spacing:-0.4px;white-space:pre;">09</div>
<div style="left:211.5px;width:400px;text-align:right;top:409.13px;height:20px;line-height:20px;font-size:11px;color:#dcdcdc;letter-spacing:0.15px;white-space:pre;">570.0</div>
<div style="left:350.5px;width:400px;text-align:center;top:426.13px;height:20px;line-height:20px;font-size:11px;color:#dcdcdc;letter-spacing:-0.4px;white-space:pre;">10</div>
<div style="left:211.5px;width:400px;text-align:right;top:426.13px;height:20px;line-height:20px;font-size:11px;color:#dcdcdc;letter-spacing:0.15px;white-space:pre;">582.5</div>
<div style="left:350.5px;width:400px;text-align:center;top:443.13px;height:20px;line-height:20px;font-size:11px;color:#dcdcdc;letter-spacing:-0.4px;white-space:pre;">11</div>
<div style="left:211.5px;width:400px;text-align:right;top:443.13px;height:20px;line-height:20px;font-size:11px;color:#dcdcdc;letter-spacing:0.15px;white-space:pre;">595.0</div>
<div style="left:350.5px;width:400px;text-align:center;top:460.13px;height:20px;line-height:20px;font-size:11px;color:#dcdcdc;letter-spacing:-0.4px;white-space:pre;">12</div>
<div style="left:211.5px;width:400px;text-align:right;top:460.13px;height:20px;line-height:20px;font-size:11px;color:#dcdcdc;letter-spacing:0.15px;white-space:pre;">608.0</div>
<div style="left:350.5px;width:400px;text-align:center;top:477.13px;height:20px;line-height:20px;font-size:11px;color:#dcdcdc;letter-spacing:-0.4px;white-space:pre;">13</div>
<div style="left:211.5px;width:400px;text-align:right;top:477.13px;height:20px;line-height:20px;font-size:11px;color:#dcdcdc;letter-spacing:0.15px;white-space:pre;">620.5</div>
<div style="left:350.5px;width:400px;text-align:center;top:494.13px;height:20px;line-height:20px;font-size:11px;color:#dcdcdc;letter-spacing:-0.4px;white-space:pre;">14</div>
<div style="left:211.5px;width:400px;text-align:right;top:494.13px;height:20px;line-height:20px;font-size:11px;color:#dcdcdc;letter-spacing:0.15px;white-space:pre;">633.0</div>
<div style="left:350.5px;width:400px;text-align:center;top:511.13px;height:20px;line-height:20px;font-size:11px;color:#dcdcdc;letter-spacing:-0.4px;white-space:pre;">15</div>
<div style="left:211.5px;width:400px;text-align:right;top:511.13px;height:20px;line-height:20px;font-size:11px;color:#dcdcdc;letter-spacing:0.15px;white-space:pre;">645.5</div>
<div style="left:350.5px;width:400px;text-align:center;top:528.13px;height:20px;line-height:20px;font-size:11px;color:#dcdcdc;letter-spacing:-0.4px;white-space:pre;">16</div>
<div style="left:211.5px;width:400px;text-align:right;top:528.13px;height:20px;line-height:20px;font-size:11px;color:#dcdcdc;letter-spacing:0.15px;white-space:pre;">658.5</div>
<div style="left:432.5px;width:400px;text-align:center;top:256.13px;height:20px;line-height:20px;font-size:11px;color:#dcdcdc;letter-spacing:-0.4px;white-space:pre;">17</div>
<div style="left:291.5px;width:400px;text-align:right;top:256.13px;height:20px;line-height:20px;font-size:11px;color:#dcdcdc;letter-spacing:0.15px;white-space:pre;">671.0</div>
<div style="left:432.5px;width:400px;text-align:center;top:273.13px;height:20px;line-height:20px;font-size:11px;color:#dcdcdc;letter-spacing:-0.4px;white-space:pre;">18</div>
<div style="left:291.5px;width:400px;text-align:right;top:273.13px;height:20px;line-height:20px;font-size:11px;color:#dcdcdc;letter-spacing:0.15px;white-space:pre;">683.5</div>
<div style="left:432.5px;width:400px;text-align:center;top:290.13px;height:20px;line-height:20px;font-size:11px;color:#dcdcdc;letter-spacing:-0.4px;white-space:pre;">19</div>
<div style="left:291.5px;width:400px;text-align:right;top:290.13px;height:20px;line-height:20px;font-size:11px;color:#dcdcdc;letter-spacing:0.15px;white-space:pre;">696.5</div>
<div style="left:432.5px;width:400px;text-align:center;top:307.13px;height:20px;line-height:20px;font-size:11px;color:#dcdcdc;letter-spacing:-0.4px;white-space:pre;">20</div>
<div style="left:291.5px;width:400px;text-align:right;top:307.13px;height:20px;line-height:20px;font-size:11px;color:#dcdcdc;letter-spacing:0.15px;white-space:pre;">709.0</div>
<div style="left:432.5px;width:400px;text-align:center;top:324.13px;height:20px;line-height:20px;font-size:11px;color:#dcdcdc;letter-spacing:-0.4px;white-space:pre;">21</div>
<div style="left:291.5px;width:400px;text-align:right;top:324.13px;height:20px;line-height:20px;font-size:11px;color:#dcdcdc;letter-spacing:0.15px;white-space:pre;">721.5</div>
<div style="left:432.5px;width:400px;text-align:center;top:341.13px;height:20px;line-height:20px;font-size:11px;color:#dcdcdc;letter-spacing:-0.4px;white-space:pre;">22</div>
<div style="left:291.5px;width:400px;text-align:right;top:341.13px;height:20px;line-height:20px;font-size:11px;color:#dcdcdc;letter-spacing:0.15px;white-space:pre;">734.5</div>
<div style="left:432.5px;width:400px;text-align:center;top:358.13px;height:20px;line-height:20px;font-size:11px;color:#dcdcdc;letter-spacing:-0.4px;white-space:pre;">23</div>
<div style="left:291.5px;width:400px;text-align:right;top:358.13px;height:20px;line-height:20px;font-size:11px;color:#dcdcdc;letter-spacing:0.15px;white-space:pre;">747.0</div>
<div style="left:432.5px;width:400px;text-align:center;top:375.13px;height:20px;line-height:20px;font-size:11px;color:#dcdcdc;letter-spacing:-0.4px;white-space:pre;">24</div>
<div style="left:291.5px;width:400px;text-align:right;top:375.13px;height:20px;line-height:20px;font-size:11px;color:#dcdcdc;letter-spacing:0.15px;white-space:pre;">759.5</div>
<div style="left:432.5px;width:400px;text-align:center;top:392.13px;height:20px;line-height:20px;font-size:11px;color:#dcdcdc;letter-spacing:-0.4px;white-space:pre;">25</div>
<div style="left:291.5px;width:400px;text-align:right;top:392.13px;height:20px;line-height:20px;font-size:11px;color:#dcdcdc;letter-spacing:0.15px;white-space:pre;">772.5</div>
<div style="left:432.5px;width:400px;text-align:center;top:409.13px;height:20px;line-height:20px;font-size:11px;color:#dcdcdc;letter-spacing:-0.4px;white-space:pre;">26</div>
<div style="left:291.5px;width:400px;text-align:right;top:409.13px;height:20px;line-height:20px;font-size:11px;color:#dcdcdc;letter-spacing:0.15px;white-space:pre;">785.0</div>
<div style="left:432.5px;width:400px;text-align:center;top:426.13px;height:20px;line-height:20px;font-size:11px;color:#dcdcdc;letter-spacing:-0.4px;white-space:pre;">27</div>
<div style="left:291.5px;width:400px;text-align:right;top:426.13px;height:20px;line-height:20px;font-size:11px;color:#dcdcdc;letter-spacing:0.15px;white-space:pre;">797.5</div>
<div style="left:432.5px;width:400px;text-align:center;top:443.13px;height:20px;line-height:20px;font-size:11px;color:#dcdcdc;letter-spacing:-0.4px;white-space:pre;">28</div>
<div style="left:291.5px;width:400px;text-align:right;top:443.13px;height:20px;line-height:20px;font-size:11px;color:#dcdcdc;letter-spacing:0.15px;white-space:pre;">810.5</div>
<div style="left:432.5px;width:400px;text-align:center;top:460.13px;height:20px;line-height:20px;font-size:11px;color:#dcdcdc;letter-spacing:-0.4px;white-space:pre;">29</div>
<div style="left:291.5px;width:400px;text-align:right;top:460.13px;height:20px;line-height:20px;font-size:11px;color:#dcdcdc;letter-spacing:0.15px;white-space:pre;">823.0</div>
<div style="left:432.5px;width:400px;text-align:center;top:477.13px;height:20px;line-height:20px;font-size:11px;color:#dcdcdc;letter-spacing:-0.4px;white-space:pre;">30</div>
<div style="left:291.5px;width:400px;text-align:right;top:477.13px;height:20px;line-height:20px;font-size:11px;color:#dcdcdc;letter-spacing:0.15px;white-space:pre;">835.5</div>
<div style="left:432.5px;width:400px;text-align:center;top:494.13px;height:20px;line-height:20px;font-size:11px;color:#dcdcdc;letter-spacing:-0.4px;white-space:pre;">31</div>
<div style="left:291.5px;width:400px;text-align:right;top:494.13px;height:20px;line-height:20px;font-size:11px;color:#dcdcdc;letter-spacing:0.15px;white-space:pre;">848.0</div>
<div style="left:432.5px;width:400px;text-align:center;top:511.13px;height:20px;line-height:20px;font-size:11px;color:#dcdcdc;letter-spacing:-0.4px;white-space:pre;">32</div>
<div style="left:291.5px;width:400px;text-align:right;top:511.13px;height:20px;line-height:20px;font-size:11px;color:#dcdcdc;letter-spacing:0.15px;white-space:pre;">861.0</div>
<div style="left:432.5px;width:400px;text-align:center;top:528.13px;height:20px;line-height:20px;font-size:11px;color:#dcdcdc;letter-spacing:-0.4px;white-space:pre;">33</div>
<div style="left:291.5px;width:400px;text-align:right;top:528.13px;height:20px;line-height:20px;font-size:11px;color:#dcdcdc;letter-spacing:0.15px;white-space:pre;">873.5</div>
<div style="left:512.5px;width:400px;text-align:center;top:256.13px;height:20px;line-height:20px;font-size:11px;color:#dcdcdc;letter-spacing:-0.4px;white-space:pre;">34</div>
<div style="left:371.5px;width:400px;text-align:right;top:256.13px;height:20px;line-height:20px;font-size:11px;color:#dcdcdc;letter-spacing:0.15px;white-space:pre;">886.0</div>
<div style="left:699px;top:273px;width:81px;height:18px;background:#050505;"></div>
<div style="left:700px;top:274px;width:24px;height:16px;background:#fde698;"></div>
<div style="left:726px;top:274px;width:52px;height:16px;background:#fde698;"></div>
<div style="left:512.5px;width:400px;text-align:center;top:273.13px;height:20px;line-height:20px;font-size:11px;color:#a0620f;letter-spacing:-0.4px;white-space:pre;">35</div>
<div style="left:371.5px;width:400px;text-align:right;top:273.13px;height:20px;line-height:20px;font-size:11px;color:#a0620f;letter-spacing:0.15px;white-space:pre;">1000.0</div>
<div style="left:699px;top:290px;width:81px;height:18px;background:#050505;"></div>
<div style="left:700px;top:291px;width:24px;height:16px;background:#fde698;"></div>
<div style="left:726px;top:291px;width:52px;height:16px;background:#fde698;"></div>
<div style="left:512.5px;width:400px;text-align:center;top:290.13px;height:20px;line-height:20px;font-size:11px;color:#a0620f;letter-spacing:-0.4px;white-space:pre;">36</div>
<div style="left:371.5px;width:400px;text-align:right;top:290.13px;height:20px;line-height:20px;font-size:11px;color:#a0620f;letter-spacing:0.15px;white-space:pre;">1013.0</div>
<div style="left:699px;top:307px;width:81px;height:18px;background:#050505;"></div>
<div style="left:700px;top:308px;width:24px;height:16px;background:#fde698;"></div>
<div style="left:726px;top:308px;width:52px;height:16px;background:#fde698;"></div>
<div style="left:512.5px;width:400px;text-align:center;top:307.13px;height:20px;line-height:20px;font-size:11px;color:#a0620f;letter-spacing:-0.4px;white-space:pre;">37</div>
<div style="left:371.5px;width:400px;text-align:right;top:307.13px;height:20px;line-height:20px;font-size:11px;color:#a0620f;letter-spacing:0.15px;white-space:pre;">1025.5</div>
<div style="left:699px;top:324px;width:81px;height:18px;background:#050505;"></div>
<div style="left:700px;top:325px;width:24px;height:16px;background:#fde698;"></div>
<div style="left:726px;top:325px;width:52px;height:16px;background:#fde698;"></div>
<div style="left:512.5px;width:400px;text-align:center;top:324.13px;height:20px;line-height:20px;font-size:11px;color:#a0620f;letter-spacing:-0.4px;white-space:pre;">38</div>
<div style="left:371.5px;width:400px;text-align:right;top:324.13px;height:20px;line-height:20px;font-size:11px;color:#a0620f;letter-spacing:0.15px;white-space:pre;">1038.0</div>
<div style="left:699px;top:341px;width:81px;height:18px;background:#050505;"></div>
<div style="left:700px;top:342px;width:24px;height:16px;background:#fde698;"></div>
<div style="left:726px;top:342px;width:52px;height:16px;background:#fde698;"></div>
<div style="left:512.5px;width:400px;text-align:center;top:341.13px;height:20px;line-height:20px;font-size:11px;color:#a0620f;letter-spacing:-0.4px;white-space:pre;">39</div>
<div style="left:371.5px;width:400px;text-align:right;top:341.13px;height:20px;line-height:20px;font-size:11px;color:#a0620f;letter-spacing:0.15px;white-space:pre;">1050.5</div>
<div style="left:699px;top:358px;width:81px;height:18px;background:#050505;"></div>
<div style="left:700px;top:359px;width:24px;height:16px;background:#fde698;"></div>
<div style="left:726px;top:359px;width:52px;height:16px;background:#fde698;"></div>
<div style="left:512.5px;width:400px;text-align:center;top:358.13px;height:20px;line-height:20px;font-size:11px;color:#a0620f;letter-spacing:-0.4px;white-space:pre;">40</div>
<div style="left:371.5px;width:400px;text-align:right;top:358.13px;height:20px;line-height:20px;font-size:11px;color:#a0620f;letter-spacing:0.15px;white-space:pre;">1063.5</div>
<div style="left:699px;top:375px;width:81px;height:18px;background:#050505;"></div>
<div style="left:700px;top:376px;width:24px;height:16px;background:#fde698;"></div>
<div style="left:726px;top:376px;width:52px;height:16px;background:#fde698;"></div>
<div style="left:512.5px;width:400px;text-align:center;top:375.13px;height:20px;line-height:20px;font-size:11px;color:#a0620f;letter-spacing:-0.4px;white-space:pre;">41</div>
<div style="left:371.5px;width:400px;text-align:right;top:375.13px;height:20px;line-height:20px;font-size:11px;color:#a0620f;letter-spacing:0.15px;white-space:pre;">1076.0</div>
<div style="left:699px;top:392px;width:81px;height:18px;background:#050505;"></div>
<div style="left:700px;top:393px;width:24px;height:16px;background:#fde698;"></div>
<div style="left:726px;top:393px;width:52px;height:16px;background:#fde698;"></div>
<div style="left:512.5px;width:400px;text-align:center;top:392.13px;height:20px;line-height:20px;font-size:11px;color:#a0620f;letter-spacing:-0.4px;white-space:pre;">42</div>
<div style="left:371.5px;width:400px;text-align:right;top:392.13px;height:20px;line-height:20px;font-size:11px;color:#a0620f;letter-spacing:0.15px;white-space:pre;">1088.5</div>
<div style="left:699px;top:409px;width:81px;height:18px;background:#050505;"></div>
<div style="left:700px;top:410px;width:24px;height:16px;background:#fde698;"></div>
<div style="left:726px;top:410px;width:52px;height:16px;background:#fde698;"></div>
<div style="left:512.5px;width:400px;text-align:center;top:409.13px;height:20px;line-height:20px;font-size:11px;color:#a0620f;letter-spacing:-0.4px;white-space:pre;">43</div>
<div style="left:371.5px;width:400px;text-align:right;top:409.13px;height:20px;line-height:20px;font-size:11px;color:#a0620f;letter-spacing:0.15px;white-space:pre;">1101.5</div>
<div style="left:699px;top:426px;width:81px;height:18px;background:#050505;"></div>
<div style="left:700px;top:427px;width:24px;height:16px;background:#fde698;"></div>
<div style="left:726px;top:427px;width:52px;height:16px;background:#fde698;"></div>
<div style="left:512.5px;width:400px;text-align:center;top:426.13px;height:20px;line-height:20px;font-size:11px;color:#a0620f;letter-spacing:-0.4px;white-space:pre;">44</div>
<div style="left:371.5px;width:400px;text-align:right;top:426.13px;height:20px;line-height:20px;font-size:11px;color:#a0620f;letter-spacing:0.15px;white-space:pre;">1114.0</div>
<div style="left:699px;top:443px;width:81px;height:18px;background:#050505;"></div>
<div style="left:700px;top:444px;width:24px;height:16px;background:#fde698;"></div>
<div style="left:726px;top:444px;width:52px;height:16px;background:#fde698;"></div>
<div style="left:512.5px;width:400px;text-align:center;top:443.13px;height:20px;line-height:20px;font-size:11px;color:#a0620f;letter-spacing:-0.4px;white-space:pre;">45</div>
<div style="left:371.5px;width:400px;text-align:right;top:443.13px;height:20px;line-height:20px;font-size:11px;color:#a0620f;letter-spacing:0.15px;white-space:pre;">1126.5</div>
<div style="left:699px;top:460px;width:81px;height:18px;background:#050505;"></div>
<div style="left:700px;top:461px;width:24px;height:16px;background:#fde698;"></div>
<div style="left:726px;top:461px;width:52px;height:16px;background:#fde698;"></div>
<div style="left:512.5px;width:400px;text-align:center;top:460.13px;height:20px;line-height:20px;font-size:11px;color:#a0620f;letter-spacing:-0.4px;white-space:pre;">46</div>
<div style="left:371.5px;width:400px;text-align:right;top:460.13px;height:20px;line-height:20px;font-size:11px;color:#a0620f;letter-spacing:0.15px;white-space:pre;">1139.5</div>
<div style="left:699px;top:477px;width:81px;height:18px;background:#050505;"></div>
<div style="left:700px;top:478px;width:24px;height:16px;background:#fde698;"></div>
<div style="left:726px;top:478px;width:52px;height:16px;background:#fde698;"></div>
<div style="left:512.5px;width:400px;text-align:center;top:477.13px;height:20px;line-height:20px;font-size:11px;color:#a0620f;letter-spacing:-0.4px;white-space:pre;">47</div>
<div style="left:371.5px;width:400px;text-align:right;top:477.13px;height:20px;line-height:20px;font-size:11px;color:#a0620f;letter-spacing:0.15px;white-space:pre;">1152.0</div>
<div style="left:699px;top:494px;width:81px;height:18px;background:#050505;"></div>
<div style="left:700px;top:495px;width:24px;height:16px;background:#fde698;"></div>
<div style="left:726px;top:495px;width:52px;height:16px;background:#fde698;"></div>
<div style="left:512.5px;width:400px;text-align:center;top:494.13px;height:20px;line-height:20px;font-size:11px;color:#a0620f;letter-spacing:-0.4px;white-space:pre;">48</div>
<div style="left:371.5px;width:400px;text-align:right;top:494.13px;height:20px;line-height:20px;font-size:11px;color:#a0620f;letter-spacing:0.15px;white-space:pre;">1164.5</div>
<div style="left:699px;top:511px;width:81px;height:18px;background:#050505;"></div>
<div style="left:700px;top:512px;width:24px;height:16px;background:#fde698;"></div>
<div style="left:726px;top:512px;width:52px;height:16px;background:#fde698;"></div>
<div style="left:512.5px;width:400px;text-align:center;top:511.13px;height:20px;line-height:20px;font-size:11px;color:#a0620f;letter-spacing:-0.4px;white-space:pre;">49</div>
<div style="left:371.5px;width:400px;text-align:right;top:511.13px;height:20px;line-height:20px;font-size:11px;color:#a0620f;letter-spacing:0.15px;white-space:pre;">1177.5</div>
<div style="left:699px;top:528px;width:81px;height:18px;background:#050505;"></div>
<div style="left:700px;top:529px;width:24px;height:16px;background:#fde698;"></div>
<div style="left:726px;top:529px;width:52px;height:16px;background:#fde698;"></div>
<div style="left:512.5px;width:400px;text-align:center;top:528.13px;height:20px;line-height:20px;font-size:11px;color:#a0620f;letter-spacing:-0.4px;white-space:pre;">50</div>
<div style="left:371.5px;width:400px;text-align:right;top:528.13px;height:20px;line-height:20px;font-size:11px;color:#a0620f;letter-spacing:0.15px;white-space:pre;">1190.0</div>
<div style="left:779px;top:256px;width:81px;height:18px;background:#050505;"></div>
<div style="left:780px;top:257px;width:24px;height:16px;background:#fde698;"></div>
<div style="left:806px;top:257px;width:52px;height:16px;background:#fde698;"></div>
<div style="left:592.5px;width:400px;text-align:center;top:256.13px;height:20px;line-height:20px;font-size:11px;color:#a0620f;letter-spacing:-0.4px;white-space:pre;">51</div>
<div style="left:451.5px;width:400px;text-align:right;top:256.13px;height:20px;line-height:20px;font-size:11px;color:#a0620f;letter-spacing:0.15px;white-space:pre;">1202.5</div>
<div style="left:779px;top:273px;width:81px;height:18px;background:#050505;"></div>
<div style="left:780px;top:274px;width:24px;height:16px;background:#fde698;"></div>
<div style="left:806px;top:274px;width:52px;height:16px;background:#fde698;"></div>
<div style="left:592.5px;width:400px;text-align:center;top:273.13px;height:20px;line-height:20px;font-size:11px;color:#a0620f;letter-spacing:-0.4px;white-space:pre;">52</div>
<div style="left:451.5px;width:400px;text-align:right;top:273.13px;height:20px;line-height:20px;font-size:11px;color:#a0620f;letter-spacing:0.15px;white-space:pre;">1215.5</div>
<div style="left:779px;top:290px;width:81px;height:18px;background:#050505;"></div>
<div style="left:780px;top:291px;width:24px;height:16px;background:#fde698;"></div>
<div style="left:806px;top:291px;width:52px;height:16px;background:#fde698;"></div>
<div style="left:592.5px;width:400px;text-align:center;top:290.13px;height:20px;line-height:20px;font-size:11px;color:#a0620f;letter-spacing:-0.4px;white-space:pre;">53</div>
<div style="left:451.5px;width:400px;text-align:right;top:290.13px;height:20px;line-height:20px;font-size:11px;color:#a0620f;letter-spacing:0.15px;white-space:pre;">1228.0</div>
<div style="left:779px;top:307px;width:81px;height:18px;background:#050505;"></div>
<div style="left:780px;top:308px;width:24px;height:16px;background:#fde698;"></div>
<div style="left:806px;top:308px;width:52px;height:16px;background:#fde698;"></div>
<div style="left:592.5px;width:400px;text-align:center;top:307.13px;height:20px;line-height:20px;font-size:11px;color:#a0620f;letter-spacing:-0.4px;white-space:pre;">54</div>
<div style="left:451.5px;width:400px;text-align:right;top:307.13px;height:20px;line-height:20px;font-size:11px;color:#a0620f;letter-spacing:0.15px;white-space:pre;">1240.5</div>
<div style="left:779px;top:324px;width:81px;height:18px;background:#050505;"></div>
<div style="left:780px;top:325px;width:24px;height:16px;background:#fde698;"></div>
<div style="left:806px;top:325px;width:52px;height:16px;background:#fde698;"></div>
<div style="left:592.5px;width:400px;text-align:center;top:324.13px;height:20px;line-height:20px;font-size:11px;color:#a0620f;letter-spacing:-0.4px;white-space:pre;">55</div>
<div style="left:451.5px;width:400px;text-align:right;top:324.13px;height:20px;line-height:20px;font-size:11px;color:#a0620f;letter-spacing:0.15px;white-space:pre;">1253.0</div>
<div style="left:779px;top:341px;width:81px;height:18px;background:#050505;"></div>
<div style="left:780px;top:342px;width:24px;height:16px;background:#fde698;"></div>
<div style="left:806px;top:342px;width:52px;height:16px;background:#fde698;"></div>
<div style="left:592.5px;width:400px;text-align:center;top:341.13px;height:20px;line-height:20px;font-size:11px;color:#a0620f;letter-spacing:-0.4px;white-space:pre;">56</div>
<div style="left:451.5px;width:400px;text-align:right;top:341.13px;height:20px;line-height:20px;font-size:11px;color:#a0620f;letter-spacing:0.15px;white-space:pre;">1266.0</div>
<div style="left:779px;top:358px;width:81px;height:18px;background:#050505;"></div>
<div style="left:780px;top:359px;width:24px;height:16px;background:#fde698;"></div>
<div style="left:806px;top:359px;width:52px;height:16px;background:#fde698;"></div>
<div style="left:592.5px;width:400px;text-align:center;top:358.13px;height:20px;line-height:20px;font-size:11px;color:#a0620f;letter-spacing:-0.4px;white-space:pre;">57</div>
<div style="left:451.5px;width:400px;text-align:right;top:358.13px;height:20px;line-height:20px;font-size:11px;color:#a0620f;letter-spacing:0.15px;white-space:pre;">1278.5</div>
<div style="left:779px;top:375px;width:81px;height:18px;background:#050505;"></div>
<div style="left:780px;top:376px;width:24px;height:16px;background:#fde698;"></div>
<div style="left:806px;top:376px;width:52px;height:16px;background:#fde698;"></div>
<div style="left:592.5px;width:400px;text-align:center;top:375.13px;height:20px;line-height:20px;font-size:11px;color:#a0620f;letter-spacing:-0.4px;white-space:pre;">58</div>
<div style="left:451.5px;width:400px;text-align:right;top:375.13px;height:20px;line-height:20px;font-size:11px;color:#a0620f;letter-spacing:0.15px;white-space:pre;">1291.0</div>
<div style="left:779px;top:392px;width:81px;height:18px;background:#050505;"></div>
<div style="left:780px;top:393px;width:24px;height:16px;background:#fde698;"></div>
<div style="left:806px;top:393px;width:52px;height:16px;background:#fde698;"></div>
<div style="left:592.5px;width:400px;text-align:center;top:392.13px;height:20px;line-height:20px;font-size:11px;color:#a0620f;letter-spacing:-0.4px;white-space:pre;">59</div>
<div style="left:451.5px;width:400px;text-align:right;top:392.13px;height:20px;line-height:20px;font-size:11px;color:#a0620f;letter-spacing:0.15px;white-space:pre;">1304.0</div>
<div style="left:779px;top:409px;width:81px;height:18px;background:#050505;"></div>
<div style="left:780px;top:410px;width:24px;height:16px;background:#fde698;"></div>
<div style="left:806px;top:410px;width:52px;height:16px;background:#fde698;"></div>
<div style="left:592.5px;width:400px;text-align:center;top:409.13px;height:20px;line-height:20px;font-size:11px;color:#a0620f;letter-spacing:-0.4px;white-space:pre;">60</div>
<div style="left:451.5px;width:400px;text-align:right;top:409.13px;height:20px;line-height:20px;font-size:11px;color:#a0620f;letter-spacing:0.15px;white-space:pre;">1316.5</div>
<div style="left:779px;top:426px;width:81px;height:18px;background:#050505;"></div>
<div style="left:780px;top:427px;width:24px;height:16px;background:#fde698;"></div>
<div style="left:806px;top:427px;width:52px;height:16px;background:#fde698;"></div>
<div style="left:592.5px;width:400px;text-align:center;top:426.13px;height:20px;line-height:20px;font-size:11px;color:#a0620f;letter-spacing:-0.4px;white-space:pre;">61</div>
<div style="left:451.5px;width:400px;text-align:right;top:426.13px;height:20px;line-height:20px;font-size:11px;color:#a0620f;letter-spacing:0.15px;white-space:pre;">1329.0</div>
<div style="left:779px;top:443px;width:81px;height:18px;background:#050505;"></div>
<div style="left:780px;top:444px;width:24px;height:16px;background:#fde698;"></div>
<div style="left:806px;top:444px;width:52px;height:16px;background:#fde698;"></div>
<div style="left:592.5px;width:400px;text-align:center;top:443.13px;height:20px;line-height:20px;font-size:11px;color:#a0620f;letter-spacing:-0.4px;white-space:pre;">62</div>
<div style="left:451.5px;width:400px;text-align:right;top:443.13px;height:20px;line-height:20px;font-size:11px;color:#a0620f;letter-spacing:0.15px;white-space:pre;">1342.0</div>
<div style="left:779px;top:460px;width:81px;height:18px;background:#050505;"></div>
<div style="left:780px;top:461px;width:24px;height:16px;background:#fde698;"></div>
<div style="left:806px;top:461px;width:52px;height:16px;background:#fde698;"></div>
<div style="left:592.5px;width:400px;text-align:center;top:460.13px;height:20px;line-height:20px;font-size:11px;color:#a0620f;letter-spacing:-0.4px;white-space:pre;">63</div>
<div style="left:451.5px;width:400px;text-align:right;top:460.13px;height:20px;line-height:20px;font-size:11px;color:#a0620f;letter-spacing:0.15px;white-space:pre;">1354.5</div>
<div style="left:779px;top:477px;width:81px;height:18px;background:#050505;"></div>
<div style="left:780px;top:478px;width:24px;height:16px;background:#fde698;"></div>
<div style="left:806px;top:478px;width:52px;height:16px;background:#fde698;"></div>
<div style="left:592.5px;width:400px;text-align:center;top:477.13px;height:20px;line-height:20px;font-size:11px;color:#a0620f;letter-spacing:-0.4px;white-space:pre;">64</div>
<div style="left:451.5px;width:400px;text-align:right;top:477.13px;height:20px;line-height:20px;font-size:11px;color:#a0620f;letter-spacing:0.15px;white-space:pre;">1367.0</div>
<div style="left:779px;top:494px;width:81px;height:18px;background:#050505;"></div>
<div style="left:780px;top:495px;width:24px;height:16px;background:#fde698;"></div>
<div style="left:806px;top:495px;width:52px;height:16px;background:#fde698;"></div>
<div style="left:592.5px;width:400px;text-align:center;top:494.13px;height:20px;line-height:20px;font-size:11px;color:#a0620f;letter-spacing:-0.4px;white-space:pre;">65</div>
<div style="left:451.5px;width:400px;text-align:right;top:494.13px;height:20px;line-height:20px;font-size:11px;color:#a0620f;letter-spacing:0.15px;white-space:pre;">1380.0</div>
<div style="left:779px;top:511px;width:81px;height:18px;background:#050505;"></div>
<div style="left:780px;top:512px;width:24px;height:16px;background:#fde698;"></div>
<div style="left:806px;top:512px;width:52px;height:16px;background:#fde698;"></div>
<div style="left:592.5px;width:400px;text-align:center;top:511.13px;height:20px;line-height:20px;font-size:11px;color:#a0620f;letter-spacing:-0.4px;white-space:pre;">66</div>
<div style="left:451.5px;width:400px;text-align:right;top:511.13px;height:20px;line-height:20px;font-size:11px;color:#a0620f;letter-spacing:0.15px;white-space:pre;">1392.5</div>
<div style="left:779px;top:528px;width:81px;height:18px;background:#050505;"></div>
<div style="left:780px;top:529px;width:24px;height:16px;background:#fde698;"></div>
<div style="left:806px;top:529px;width:52px;height:16px;background:#fde698;"></div>
<div style="left:592.5px;width:400px;text-align:center;top:528.13px;height:20px;line-height:20px;font-size:11px;color:#a0620f;letter-spacing:-0.4px;white-space:pre;">67</div>
<div style="left:451.5px;width:400px;text-align:right;top:528.13px;height:20px;line-height:20px;font-size:11px;color:#a0620f;letter-spacing:0.15px;white-space:pre;">1405.0</div>
<div style="left:859px;top:256px;width:81px;height:18px;background:#050505;"></div>
<div style="left:860px;top:257px;width:24px;height:16px;background:#fde698;"></div>
<div style="left:886px;top:257px;width:52px;height:16px;background:#fde698;"></div>
<div style="left:672.5px;width:400px;text-align:center;top:256.13px;height:20px;line-height:20px;font-size:11px;color:#a0620f;letter-spacing:-0.4px;white-space:pre;">68</div>
<div style="left:531.5px;width:400px;text-align:right;top:256.13px;height:20px;line-height:20px;font-size:11px;color:#a0620f;letter-spacing:0.15px;white-space:pre;">1418.0</div>
<div style="left:859px;top:273px;width:81px;height:18px;background:#050505;"></div>
<div style="left:860px;top:274px;width:24px;height:16px;background:#fde698;"></div>
<div style="left:886px;top:274px;width:52px;height:16px;background:#fde698;"></div>
<div style="left:672.5px;width:400px;text-align:center;top:273.13px;height:20px;line-height:20px;font-size:11px;color:#a0620f;letter-spacing:-0.4px;white-space:pre;">69</div>
<div style="left:531.5px;width:400px;text-align:right;top:273.13px;height:20px;line-height:20px;font-size:11px;color:#a0620f;letter-spacing:0.15px;white-space:pre;">1430.5</div>
<div style="left:859px;top:290px;width:81px;height:18px;background:#050505;"></div>
<div style="left:860px;top:291px;width:24px;height:16px;background:#fde698;"></div>
<div style="left:886px;top:291px;width:52px;height:16px;background:#fde698;"></div>
<div style="left:672.5px;width:400px;text-align:center;top:290.13px;height:20px;line-height:20px;font-size:11px;color:#a0620f;letter-spacing:-0.4px;white-space:pre;">70</div>
<div style="left:531.5px;width:400px;text-align:right;top:290.13px;height:20px;line-height:20px;font-size:11px;color:#a0620f;letter-spacing:0.15px;white-space:pre;">1443.0</div>
<div style="left:859px;top:307px;width:81px;height:18px;background:#050505;"></div>
<div style="left:860px;top:308px;width:24px;height:16px;background:#fde698;"></div>
<div style="left:886px;top:308px;width:52px;height:16px;background:#fde698;"></div>
<div style="left:672.5px;width:400px;text-align:center;top:307.13px;height:20px;line-height:20px;font-size:11px;color:#a0620f;letter-spacing:-0.4px;white-space:pre;">71</div>
<div style="left:531.5px;width:400px;text-align:right;top:307.13px;height:20px;line-height:20px;font-size:11px;color:#a0620f;letter-spacing:0.15px;white-space:pre;">1455.5</div>
<div style="left:859px;top:324px;width:81px;height:18px;background:#050505;"></div>
<div style="left:860px;top:325px;width:24px;height:16px;background:#fde698;"></div>
<div style="left:886px;top:325px;width:52px;height:16px;background:#fde698;"></div>
<div style="left:672.5px;width:400px;text-align:center;top:324.13px;height:20px;line-height:20px;font-size:11px;color:#a0620f;letter-spacing:-0.4px;white-space:pre;">72</div>
<div style="left:531.5px;width:400px;text-align:right;top:324.13px;height:20px;line-height:20px;font-size:11px;color:#a0620f;letter-spacing:0.15px;white-space:pre;">1468.5</div>
<div style="left:859px;top:341px;width:81px;height:18px;background:#050505;"></div>
<div style="left:860px;top:342px;width:24px;height:16px;background:#fde698;"></div>
<div style="left:886px;top:342px;width:52px;height:16px;background:#fde698;"></div>
<div style="left:672.5px;width:400px;text-align:center;top:341.13px;height:20px;line-height:20px;font-size:11px;color:#a0620f;letter-spacing:-0.4px;white-space:pre;">73</div>
<div style="left:531.5px;width:400px;text-align:right;top:341.13px;height:20px;line-height:20px;font-size:11px;color:#a0620f;letter-spacing:0.15px;white-space:pre;">1481.0</div>
<div style="left:859px;top:358px;width:81px;height:18px;background:#050505;"></div>
<div style="left:860px;top:359px;width:24px;height:16px;background:#c8f0c8;"></div>
<div style="left:886px;top:359px;width:52px;height:16px;background:#c8f0c8;"></div>
<div style="left:672.5px;width:400px;text-align:center;top:358.13px;height:20px;line-height:20px;font-size:11px;color:#0c5a0c;letter-spacing:-0.4px;white-space:pre;">74</div>
<div style="left:531.5px;width:400px;text-align:right;top:358.13px;height:20px;line-height:20px;font-size:11px;color:#0c5a0c;letter-spacing:0.15px;white-space:pre;">1493.5</div>
<div style="left:672.5px;width:400px;text-align:center;top:375.13px;height:20px;line-height:20px;font-size:11px;color:#dcdcdc;letter-spacing:-0.4px;white-space:pre;">75</div>
<div style="left:531.5px;width:400px;text-align:right;top:375.13px;height:20px;line-height:20px;font-size:11px;color:#dcdcdc;letter-spacing:0.15px;white-space:pre;">202.5</div>
<div style="left:672.5px;width:400px;text-align:center;top:392.13px;height:20px;line-height:20px;font-size:11px;color:#dcdcdc;letter-spacing:-0.4px;white-space:pre;">76</div>
<div style="left:531.5px;width:400px;text-align:right;top:392.13px;height:20px;line-height:20px;font-size:11px;color:#dcdcdc;letter-spacing:0.15px;white-space:pre;">270.0</div>
<div style="left:672.5px;width:400px;text-align:center;top:409.13px;height:20px;line-height:20px;font-size:11px;color:#dcdcdc;letter-spacing:-0.4px;white-space:pre;">77</div>
<div style="left:531.5px;width:400px;text-align:right;top:409.13px;height:20px;line-height:20px;font-size:11px;color:#dcdcdc;letter-spacing:0.15px;white-space:pre;">324.0</div>
<div style="left:859px;top:426px;width:81px;height:18px;background:#050505;"></div>
<div style="left:860px;top:427px;width:24px;height:16px;background:#c8f0c8;"></div>
<div style="left:886px;top:427px;width:52px;height:16px;background:#c8f0c8;"></div>
<div style="left:672.5px;width:400px;text-align:center;top:426.13px;height:20px;line-height:20px;font-size:11px;color:#0c5a0c;letter-spacing:-0.4px;white-space:pre;">78</div>
<div style="left:531.5px;width:400px;text-align:right;top:426.13px;height:20px;line-height:20px;font-size:11px;color:#0c5a0c;letter-spacing:0.15px;white-space:pre;">540.0</div>
<div style="left:544px;top:553.13px;height:20px;line-height:20px;font-size:11px;color:#d0d0d0;letter-spacing:-0.12px;white-space:pre;">Max Table Clock</div>
<div style="left:727px;top:553px;width:1px;height:19px;background:#191919;"></div>
<div style="left:484.6px;width:400px;text-align:center;top:553.73px;height:20px;line-height:20px;font-size:11px;color:#d0d0d0;letter-spacing:-0.27px;white-space:pre;">1493.5 MHz</div>
<div style="left:761px;top:555px;width:179px;height:4px;border:1px solid #191919;box-sizing:border-box;background:#202020"></div>
<svg style="left:783.0px;top:550px" width="11" height="20" viewBox="0 0 11 20"><path d="M0 0H11V13.5L5.5 19L0 13.5Z" fill="#878787"/></svg>
<svg style="left:938px;top:348px" width="40" height="40" viewBox="938 348 40 40"><path d="M941 368L956.2 351.5V360H973V376H956.2V384.8Z" fill="#ee3333"/></svg>
</body></html>
